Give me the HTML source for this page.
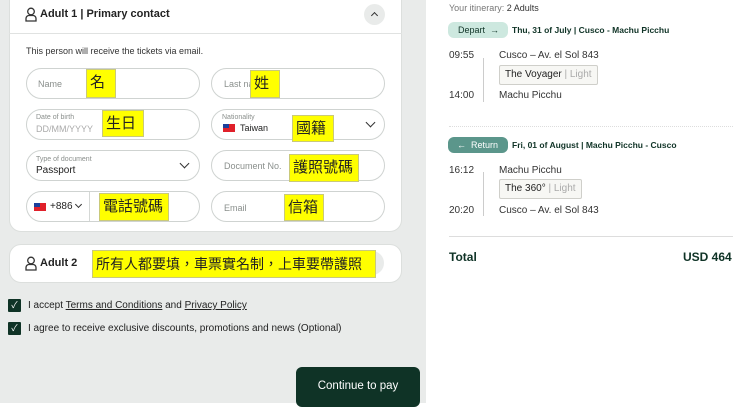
<!DOCTYPE html><html><head><meta charset="utf-8"><style>
*{box-sizing:border-box;margin:0;padding:0}
body{width:740px;height:403px;overflow:hidden;font-family:"Liberation Sans","Noto Sans CJK TC",sans-serif;background:#fff;position:relative;color:#222}
.left{position:absolute;left:0;top:0;width:426px;height:403px;background:#e9ebea}
.abs{position:absolute}
.card{position:absolute;left:9px;background:#fff;border:1px solid #dcdfdd}
.inp{position:absolute;width:174px;height:31px;border:1px solid #cfd3d1;border-radius:16px;background:#fff}
.ph{position:absolute;font-size:9px;color:#8a8f8c}
.lbl{position:absolute;font-size:7px;color:#8a8f8c}
.val{position:absolute;font-size:10px;color:#222}
.y{position:absolute;background:#ffff00;border:1px solid #c9c97a;font-size:15px;line-height:24px;color:#222;padding-left:3px;font-family:"Noto Sans CJK TC",sans-serif;white-space:nowrap;overflow:hidden}
.chev{position:absolute;width:7px;height:7px;border-right:1.6px solid #333;border-bottom:1.6px solid #333;transform:rotate(45deg)}
.flag{position:absolute;width:12px;height:8px;background:#e0202a}
.flag:after{content:"";position:absolute;left:0;top:0;width:6px;height:4px;background:#1c3f9a}
.cb{position:absolute;left:8px;width:13px;height:13px;background:#0f3326;border-radius:1px;color:#fff;font-size:9px;line-height:13px;text-align:center}
.r{position:absolute;font-size:10px;color:#333}
.tag{position:absolute;border:1px solid #cfcfca;background:#f7f7f4;border-radius:2px;font-size:10px;height:20px;line-height:18px;padding:0 5px}
</style></head><body>
<div class="left"></div>
<div class="card" style="top:-2px;width:393px;height:234px;border-radius:0 0 12px 12px"></div>
<svg class="abs" style="left:25px;top:7px" width="12" height="15" viewBox="0 0 12 15"><circle cx="6" cy="4.5" r="3.3" fill="none" stroke="#333" stroke-width="1.3"/><path d="M1 14v-2.5a3 3 0 0 1 3-3h4a3 3 0 0 1 3 3V14z" fill="none" stroke="#333" stroke-width="1.3"/></svg>
<div class="abs" style="left:40px;top:8px;font-size:11px;font-weight:bold">Adult 1 | Primary contact</div>
<div class="abs" style="left:364px;top:4px;width:21px;height:21px;border-radius:50%;background:#e9ebea"></div>
<div class="chev" style="left:372px;top:13px;width:5px;height:5px;transform:rotate(225deg);border-width:1.3px"></div>
<div class="abs" style="left:9px;top:33px;width:393px;height:1px;background:#e0e2e1"></div>
<div class="abs" style="left:26px;top:46px;font-size:9px;color:#333">This person will receive the tickets via email.</div>

<div class="inp" style="left:26px;top:68px"></div><div class="ph" style="left:38px;top:79px">Name</div>
<div class="inp" style="left:211px;top:68px"></div><div class="ph" style="left:224px;top:79px">Last na</div>
<div class="inp" style="left:26px;top:109px"></div><div class="lbl" style="left:36px;top:114px">Date of birth</div><div class="ph" style="left:36px;top:124px;color:#aaa">DD/MM/YYYY</div>
<div class="inp" style="left:211px;top:109px"></div><div class="lbl" style="left:222px;top:114px">Nationality</div><div class="flag" style="left:223px;top:124px"></div><div class="val" style="left:240px;top:123px;font-size:9px">Taiwan</div><div class="chev" style="left:367px;top:119px"></div>
<div class="inp" style="left:26px;top:150px"></div><div class="lbl" style="left:36px;top:156px">Type of document</div><div class="val" style="left:36px;top:165px">Passport</div><div class="chev" style="left:181px;top:160px"></div>
<div class="inp" style="left:211px;top:150px"></div><div class="ph" style="left:224px;top:161px">Document No.</div>
<div class="inp" style="left:26px;top:191px"></div><div class="flag" style="left:34px;top:203px"></div><div class="val" style="left:50px;top:201px">+886</div><div class="chev" style="left:76px;top:202px;width:5px;height:5px;border-width:1.3px"></div><div class="abs" style="left:89px;top:192px;width:1px;height:29px;background:#d5d8d6"></div>
<div class="inp" style="left:211px;top:191px"></div><div class="ph" style="left:224px;top:203px">Email</div>

<div class="y" style="left:86px;top:69px;width:30px;height:29px">名</div>
<div class="y" style="left:250px;top:70px;width:30px;height:28px">姓</div>
<div class="y" style="left:102px;top:110px;width:42px;height:27px">生日</div>
<div class="y" style="left:292px;top:115px;width:42px;height:27px">國籍</div>
<div class="y" style="left:289px;top:154px;width:70px;height:28px">護照號碼</div>
<div class="y" style="left:99px;top:193px;width:70px;height:28px">電話號碼</div>
<div class="y" style="left:284px;top:194px;width:40px;height:27px">信箱</div>

<div class="card" style="top:244px;width:393px;height:39px;border-radius:12px"></div>
<div class="abs" style="left:360px;top:251px;width:24px;height:24px;border-radius:50%;background:#e9ebea"></div>
<svg class="abs" style="left:25px;top:256px" width="12" height="15" viewBox="0 0 12 15"><circle cx="6" cy="4.5" r="3.3" fill="none" stroke="#333" stroke-width="1.3"/><path d="M1 14v-2.5a3 3 0 0 1 3-3h4a3 3 0 0 1 3 3V14z" fill="none" stroke="#333" stroke-width="1.3"/></svg>
<div class="abs" style="left:40px;top:257px;font-size:11px;font-weight:bold">Adult 2</div>
<div class="y" style="left:92px;top:250px;width:284px;height:28px;font-size:14px;line-height:26px">所有人都要填，車票實名制，上車要帶護照</div>

<div class="cb" style="top:299px">✓</div>
<div class="abs" style="left:28px;top:300px;font-size:10px">I accept <u>Terms and Conditions</u> and <u>Privacy Policy</u></div>
<div class="cb" style="top:322px">✓</div>
<div class="abs" style="left:28px;top:323px;font-size:10px">I agree to receive exclusive discounts, promotions and news (Optional)</div>
<div class="abs" style="left:296px;top:367px;width:124px;height:40px;background:#0f3326;border-radius:6px;color:#fff;font-size:11.5px;text-align:center;line-height:38px">Continue to pay</div>

<div class="abs" style="left:449px;top:3px;font-size:9px;color:#777">Your itinerary: <span style="color:#333">2 Adults</span></div>
<div class="abs" style="left:448px;top:22px;width:60px;height:16px;border-radius:6px;background:#cde8df;color:#0f3326;font-size:9px;line-height:16px;padding-left:10px">Depart &nbsp;→</div>
<div class="abs" style="left:512px;top:25px;font-size:8.5px;color:#0f3326;font-weight:bold">Thu, 31 of July | Cusco - Machu Picchu</div>
<div class="r" style="left:449px;top:50px">09:55</div><div class="r" style="left:499px;top:50px">Cusco – Av. el Sol 843</div>
<div class="abs" style="left:483px;top:58px;width:1px;height:44px;background:#ccc"></div>
<div class="tag" style="left:499px;top:65px">The Voyager <span style="color:#aaa">| Light</span></div>
<div class="r" style="left:449px;top:90px">14:00</div><div class="r" style="left:499px;top:90px">Machu Picchu</div>
<div class="abs" style="left:449px;top:126px;width:284px;border-top:1px dotted #ddd"></div>
<div class="abs" style="left:448px;top:137px;width:60px;height:16px;border-radius:6px;background:#5b968b;color:#fff;font-size:9px;line-height:16px;padding-left:9px">←&nbsp; Return</div>
<div class="abs" style="left:512px;top:140px;font-size:8.5px;color:#0f3326;font-weight:bold">Fri, 01 of August | Machu Picchu - Cusco</div>
<div class="r" style="left:449px;top:165px">16:12</div><div class="r" style="left:499px;top:165px">Machu Picchu</div>
<div class="abs" style="left:483px;top:172px;width:1px;height:44px;background:#ccc"></div>
<div class="tag" style="left:499px;top:179px">The 360° <span style="color:#aaa">| Light</span></div>
<div class="r" style="left:449px;top:205px">20:20</div><div class="r" style="left:499px;top:205px">Cusco – Av. el Sol 843</div>
<div class="abs" style="left:449px;top:236px;width:284px;height:1px;background:#ddd"></div>
<div class="abs" style="left:449px;top:250px;font-size:12px;font-weight:bold;color:#0f3326">Total</div>
<div class="abs" style="left:683px;top:250px;font-size:12px;font-weight:bold;color:#0f3326">USD 464</div>
</body></html>
